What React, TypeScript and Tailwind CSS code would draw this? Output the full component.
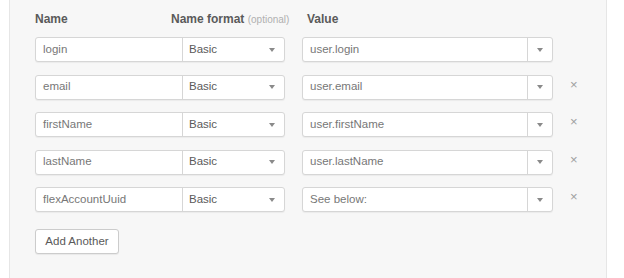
const rows = [
  { name: 'login', value: 'user.login', removable: false },
  { name: 'email', value: 'user.email', removable: true },
  { name: 'firstName', value: 'user.firstName', removable: true },
  { name: 'lastName', value: 'user.lastName', removable: true },
  { name: 'flexAccountUuid', value: 'See below:', removable: true },
];

const Caret = () => (
  <svg width="6" height="4" viewBox="0 0 6 4" className="shrink-0">
    <path d="M0 0h6L3 4z" fill="#8a8a8a" />
  </svg>
);

const AttributeRow = ({ name, value, removable }: { name: string; value: string; removable: boolean }) => (
  <div className="flex items-center h-[25px] text-[11.5px]">
    <div className="flex h-full w-[250px] bg-white border border-[#d6d6d6] rounded-[3px] shadow-[0_1px_1px_rgba(0,0,0,0.05)]">
      <div className="w-[147px] flex items-center pl-[7px] text-[#777] border-r border-[#d6d6d6]">{name}</div>
      <div className="flex-1 flex items-center justify-between pl-[6px] pr-[9px] text-[#5a5a5a]">
        <span>Basic</span>
        <Caret />
      </div>
    </div>
    <div className="ml-[17px] flex h-full w-[251px] bg-white border border-[#d6d6d6] rounded-[3px] shadow-[0_1px_1px_rgba(0,0,0,0.05)]">
      <div className="flex-1 flex items-center pl-[7px] text-[#777] border-r border-[#d6d6d6]">{value}</div>
      <div className="w-[24px] flex items-center justify-center">
        <Caret />
      </div>
    </div>
    {removable && (
      <div className="ml-[17px] -mt-[6px] text-[#a0a0a0] text-[13px] leading-none">×</div>
    )}
  </div>
);

export default function App() {
  return (
    <div className="w-[624px] h-[278px] bg-white overflow-hidden" style={{ fontFamily: '"Liberation Sans", Arial, sans-serif' }}>
      <div className="ml-[9px] w-[598px] h-full bg-[#f7f7f7] border-x border-[#e6e6e6] pl-[25px] pt-[12px] text-[12px]">
        <div className="flex h-[14px] items-center font-semibold text-[#5a5a5a]">
          <div className="w-[136px]">Name</div>
          <div className="w-[136px] whitespace-nowrap">
            Name format <span className="font-normal text-[10px] text-[#b0b0b0]">(optional)</span>
          </div>
          <div>Value</div>
        </div>
        <div className="mt-[11px] flex flex-col gap-[12.5px]">
          {rows.map((r) => (
            <AttributeRow key={r.name} {...r} />
          ))}
        </div>
        <button className="mt-[17px] h-[25px] w-[84px] bg-white border border-[#ccc] rounded-[3px] text-[11.5px] text-[#5a5a5a] shadow-[0_1px_1px_rgba(0,0,0,0.06)]">
          Add Another
        </button>
      </div>
    </div>
  );
}
